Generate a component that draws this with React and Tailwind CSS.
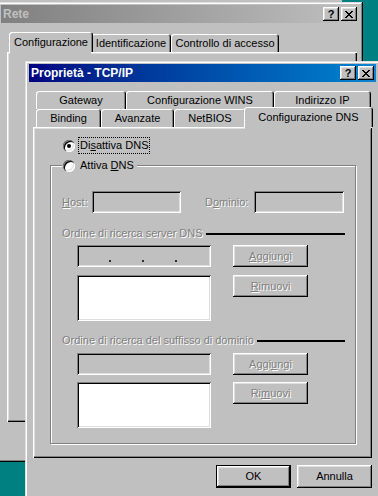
import { Fragment } from "react";

// win95 bevels
const RAISED = "shadow-[inset_-1px_-1px_0_#000,inset_1px_1px_0_#fff,inset_-2px_-2px_0_#808080,inset_2px_2px_0_#dfdfdf]";
const SUNKEN = "shadow-[inset_1px_1px_0_#808080,inset_-1px_-1px_0_#fff,inset_2px_2px_0_#000,inset_-2px_-2px_0_#dfdfdf]";
const WINDOW = "shadow-[inset_-1px_-1px_0_#000,inset_1px_1px_0_#dfdfdf,inset_-2px_-2px_0_#808080,inset_2px_2px_0_#fff]";
const PANEL = "shadow-[inset_1px_1px_0_#fff,inset_-1px_-1px_0_#000,inset_-2px_-2px_0_#808080,inset_2px_2px_0_#dfdfdf]";
const TAB = "shadow-[inset_1px_1px_0_#fff,inset_-1px_0_0_#000,inset_-2px_0_0_#808080]";
const DIS = "text-[#808080] [text-shadow:1px_1px_0_#fff]";

const reteTabs = [
  { label: "Configurazione", w: "w-[84px]", sel: true },
  { label: "Identificazione", w: "w-[80px]" },
  { label: "Controllo di accesso", w: "w-[108px]" },
];

const backRow = [
  { label: "Gateway", w: "w-[90px]" },
  { label: "Configurazione WINS", w: "w-[148px]" },
  { label: "Indirizzo IP", w: "w-[97px]" },
];

const frontRow = [
  { label: "Binding", w: "w-[65px]" },
  { label: "Avanzate", w: "w-[73px]" },
  { label: "NetBIOS", w: "w-[72px]" },
  { label: "Configurazione DNS", w: "w-[129px]", sel: true },
];

function CloseIcon() {
  return (
    <svg width="8" height="7" viewBox="0 0 8 7" shapeRendering="crispEdges">
      <path
        d="M0 0h2v1H0zM6 0h2v1H6zM1 1h2v1H1zM5 1h2v1H5zM2 2h4v1H2zM3 3h2v1H3zM2 4h4v1H2zM1 5h2v1H1zM5 5h2v1H5zM0 6h2v1H0zM6 6h2v1H6z"
        fill="#000"
      />
    </svg>
  );
}

function CapBtn({ children }) {
  return (
    <div className={`w-[16px] h-[14px] bg-[#c0c0c0] ${RAISED} flex items-center justify-center`}>
      {children}
    </div>
  );
}

function Caption({ title, active }) {
  return (
    <div
      className={
        active
          ? "h-[18px] flex items-center bg-linear-to-r from-[#000080] to-[#1084d0] pl-[2px] pr-[2px]"
          : "h-[18px] flex items-center bg-linear-to-r from-[#808080] to-[#c0c0c0] pl-[2px] pr-[2px]"
      }
    >
      <span className={active ? "flex-1 font-bold text-[12px] text-white" : "flex-1 font-bold text-[12px] text-[#c0c0c0]"}>
        {title}
      </span>
      <CapBtn>
        <span className="font-bold text-[11px] leading-none">?</span>
      </CapBtn>
      <div className="w-[2px]" />
      <CapBtn>
        <CloseIcon />
      </CapBtn>
    </div>
  );
}

function Tab({ label, w, sel }) {
  if (sel) {
    return (
      <div className={`relative z-10 -mt-[2px] -mx-[2px] h-[20px] ${w} rounded-t-[3px] bg-[#c0c0c0] ${TAB} flex items-center justify-center`}>
        {label}
        <div className="absolute left-[1px] right-[2px] -bottom-[2px] h-[2px] bg-[#c0c0c0]" />
      </div>
    );
  }
  return (
    <div className={`h-[18px] ${w} rounded-t-[3px] bg-[#c0c0c0] ${TAB} flex items-center justify-center`}>
      {label}
    </div>
  );
}

function Radio({ on }) {
  return (
    <div className="w-[12px] h-[12px] shrink-0 rounded-full bg-white shadow-[inset_1px_1px_0_#808080,inset_2px_2px_0_#000,inset_-1px_-1px_0_#fff,inset_-2px_-2px_0_#dfdfdf] flex items-center justify-center">
      {on && <div className="w-[4px] h-[4px] rounded-full bg-black" />}
    </div>
  );
}

function Btn({ children }) {
  return (
    <div className={`w-[75px] h-[22px] bg-[#c0c0c0] ${RAISED} flex items-center justify-center ${DIS}`}>
      {children}
    </div>
  );
}

function SectionLabel({ children }) {
  return (
    <div className="h-[13px] flex items-center pl-[11px] pr-[10px]">
      <span className={`whitespace-nowrap ${DIS}`}>{children}</span>
      <div className="flex-1 h-[2px] bg-black ml-[3px]" />
    </div>
  );
}

function IpBox() {
  return (
    <div className={`h-[22px] ${SUNKEN} bg-[#c0c0c0] flex items-end pl-[2px] pb-[5px]`}>
      {[0, 1, 2, 3].map((i) => (
        <Fragment key={i}>
          <div className="w-[29px]" />
          {i < 3 && (
            <div className="w-[4px] flex justify-center">
              <div className="w-[2px] h-[2px] bg-[#303030]" />
            </div>
          )}
        </Fragment>
      ))}
    </div>
  );
}

export default function App() {
  return (
    <div className="relative w-[378px] h-[496px] overflow-hidden bg-[#008080] font-['Liberation_Sans',Arial,sans-serif] text-[11px] leading-[13px] text-black">
      {/* window peeking above */}
      <div className="absolute top-0 left-0 w-[342px] h-[3px] bg-[#c0c0c0]" />

      {/* Rete, behind */}
      <div className={`absolute left-[-3px] top-[2px] w-[366px] h-[460px] bg-[#c0c0c0] ${WINDOW} pt-[3px] px-[4px]`}>
        <Caption title="Rete" />
        <div className="relative z-10 flex mt-[11px] ml-[10px]">
          {reteTabs.map((t) => (
            <Tab key={t.label} {...t} />
          ))}
        </div>
        <div className={`ml-[6px] mr-[2px] h-[370px] ${PANEL}`} />
      </div>

      {/* Proprietà - TCP/IP */}
      <div className={`absolute left-[25px] top-[61px] w-[355px] h-[445px] bg-[#c0c0c0] ${WINDOW} pt-[3px] px-[4px]`}>
        <Caption title="Proprietà - TCP/IP" active />

        <div className="mt-[9px] ml-[7px] flex">
          {backRow.map((t) => (
            <Tab key={t.label} {...t} />
          ))}
        </div>
        <div className="relative z-10 ml-[7px] flex">
          {frontRow.map((t) => (
            <Tab key={t.label} {...t} />
          ))}
        </div>

        <div className={`mx-[4px] h-[331px] ${PANEL} pt-[10px]`}>
          <div className="flex items-center ml-[30px] h-[17px] gap-[3px]">
            <Radio on />
            <span className="h-[17px] flex items-center border border-dotted border-black px-[1px]">
              Di<u className="underline-offset-[1px]">s</u>attiva DNS
            </span>
          </div>

          <div className="relative mt-[11px] ml-[17px] mr-[16px] h-[279px] border border-[#808080] shadow-[inset_1px_1px_0_#fff,1px_1px_0_#fff]">
            <div className="absolute -top-[9px] left-[11px] h-[17px] pl-[1px] pr-[2px] bg-[#c0c0c0] flex items-center gap-[4px]">
              <Radio />
              <span className="px-[1px]">
                Attiva <u className="underline-offset-[1px]">D</u>NS
              </span>
            </div>

            <div className="mt-[25px] h-[22px] flex items-center pl-[11px]">
              <span className={`w-[30px] ${DIS}`}>
                <u className="underline-offset-[1px]">H</u>ost:
              </span>
              <div className={`w-[89px] h-[22px] ${SUNKEN}`} />
              <span className={`ml-[24px] w-[49px] ${DIS}`}>
                D<u className="underline-offset-[1px]">o</u>minio:
              </span>
              <div className={`w-[90px] h-[22px] ${SUNKEN}`} />
            </div>

            <div className="mt-[14px]">
              <SectionLabel>Ordine di ricerca server DNS</SectionLabel>
            </div>

            <div className="mt-[5px] flex pl-[26px]">
              <div className="w-[134px] flex flex-col">
                <IpBox />
                <div className={`mt-[8px] h-[46px] bg-white ${SUNKEN}`} />
              </div>
              <div className="ml-[22px] flex flex-col">
                <Btn>
                  <u className="underline-offset-[1px]">A</u>ggiungi
                </Btn>
                <div className="mt-[8px]">
                  <Btn>
                    <u className="underline-offset-[1px]">R</u>imuovi
                  </Btn>
                </div>
              </div>
            </div>

            <div className="mt-[13px]">
              <SectionLabel>Ordine di ricerca del suffisso di dominio</SectionLabel>
            </div>

            <div className="mt-[6px] flex pl-[26px]">
              <div className="w-[134px] flex flex-col">
                <div className={`h-[22px] ${SUNKEN}`} />
                <div className={`mt-[7px] h-[46px] bg-white ${SUNKEN}`} />
              </div>
              <div className="ml-[22px] flex flex-col">
                <Btn>
                  Aggi<u className="underline-offset-[1px]">u</u>ngi
                </Btn>
                <div className="mt-[7px]">
                  <Btn>
                    Ri<u className="underline-offset-[1px]">m</u>uovi
                  </Btn>
                </div>
              </div>
            </div>
          </div>
        </div>

        <div className="mt-[7px] mr-[4px] flex justify-end gap-[6px]">
          <div className="w-[75px] h-[23px] border border-black">
            <div className={`h-full ${RAISED} flex items-center justify-center`}>OK</div>
          </div>
          <div className={`w-[75px] h-[23px] ${RAISED} flex items-center justify-center`}>Annulla</div>
        </div>
      </div>
    </div>
  );
}
